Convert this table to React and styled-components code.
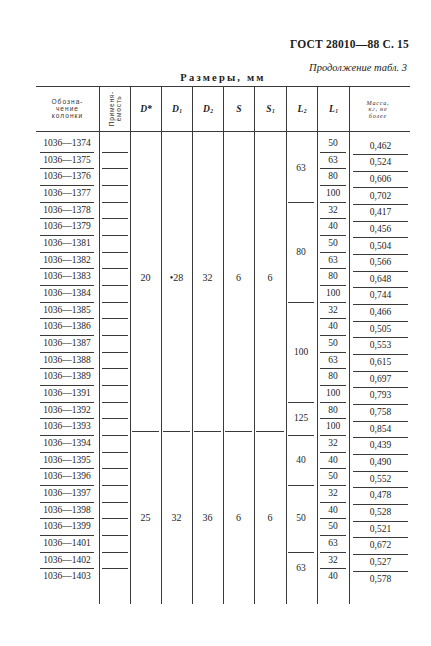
import React from 'react';
import styled, { createGlobalStyle } from 'styled-components';

const ROW = 16.67;
const INK = '#1d1d1d';
const RULE = '#3a3a3a';

const Global = createGlobalStyle`
  html, body { margin: 0; padding: 0; background: #fff; }
  body {
    width: 431px; height: 646px; overflow: hidden;
    font-family: "Liberation Serif", "DejaVu Serif", serif;
    color: ${INK};
  }
`;

const Page = styled.div`
  width: 431px;
  height: 646px;
  box-sizing: border-box;
  padding: 37px 21px 0 36px;
  display: flex;
  flex-direction: column;
`;

const RunningHead = styled.div`
  align-self: flex-end;
  height: 14px;
  line-height: 14px;
  font-size: 11.5px;
  font-weight: bold;
  letter-spacing: 0.2px;
  padding-right: 1px;
`;

const TableRef = styled.div`
  align-self: flex-end;
  margin-top: 10px;
  height: 13px;
  line-height: 13px;
  font-size: 10.5px;
  font-style: italic;
  padding-right: 3px;
`;

const Caption = styled.div`
  margin-top: -2px;
  height: 12px;
  line-height: 12px;
  text-align: center;
  font-size: 10.5px;
  font-weight: bold;
  letter-spacing: 2.2px;
`;

const Table = styled.div`
  margin-top: 2px;
  height: 518px;
  box-sizing: border-box;
  border-top: 1.5px solid ${RULE};
  display: flex;
  align-items: stretch;
`;

const Column = styled.div`
  width: ${p => p.$w}px;
  box-sizing: border-box;
  border-left: ${p => (p.$first ? 'none' : `1px solid ${RULE}`)};
  display: flex;
  flex-direction: column;
`;

const HeadCell = styled.div`
  height: 44.5px;
  box-sizing: border-box;
  border-bottom: 1px solid ${RULE};
  display: flex;
  align-items: center;
  justify-content: center;
  text-align: center;
`;

const SmallHead = styled.div`
  font-family: "Liberation Sans", "DejaVu Sans", sans-serif;
  font-size: 6.6px;
  line-height: 7.4px;
  letter-spacing: 1px;
  color: #333;
`;

const VerticalHead = styled.div`
  writing-mode: vertical-rl;
  transform: rotate(180deg);
  font-family: "Liberation Sans", "DejaVu Sans", sans-serif;
  font-size: 6.6px;
  line-height: 6.5px;
  letter-spacing: 0.7px;
  color: #333;
  text-align: center;
`;

const MassHead = styled.div`
  font-style: italic;
  font-size: 6.2px;
  line-height: 6.8px;
  letter-spacing: 0.8px;
  color: #333;
  padding-right: 4px;
  padding-top: 2px;
`;

const Symbol = styled.span`
  font-style: italic;
  font-weight: bold;
  font-size: 9.5px;
  sub {
    font-size: 5.5px;
    vertical-align: -1px;
    margin-left: 0.5px;
  }
`;

const Body = styled.div`
  flex: 1;
  display: flex;
  flex-direction: column;
  padding-top: ${p => p.$top ?? 4.6}px;
`;

const Cell = styled.div`
  height: ${p => p.$h}px;
  flex: ${p => (p.$grow ? 1 : 'none')};
  box-sizing: border-box;
  margin: 0 ${p => p.$mr ?? 2}px 0 ${p => p.$ml ?? 2}px;
  border-bottom: ${p => (p.$line ? `1px solid ${RULE}` : '1px solid transparent')};
  display: flex;
  align-items: center;
  justify-content: center;
  padding-bottom: ${p => p.$pb ?? 0}px;
  font-size: ${p => p.$fs ?? 9.5}px;
  line-height: 1;
  white-space: nowrap;
`;

const designations = [
  '1374', '1375', '1376', '1377', '1378', '1379', '1381', '1382', '1383',
  '1384', '1385', '1386', '1387', '1388', '1389', '1391', '1392', '1393',
  '1394', '1395', '1396', '1397', '1398', '1399', '1401', '1402', '1403',
];

const l2Groups = [
  ['63', 4], ['80', 6], ['100', 6], ['125', 2], ['40', 3], ['50', 4], ['63', 2],
];

const l1 = [
  '50', '63', '80', '100', '32', '40', '50', '63', '80', '100', '32', '40',
  '50', '63', '80', '100', '80', '100', '32', '40', '50', '32', '40', '50',
  '63', '32', '40',
];

const mass = [
  '0,462', '0,524', '0,606', '0,702', '0,417', '0,456', '0,504', '0,566',
  '0,648', '0,744', '0,466', '0,505', '0,553', '0,615', '0,697', '0,793',
  '0,758', '0,854', '0,439', '0,490', '0,552', '0,478', '0,528', '0,521',
  '0,672', '0,527', '0,578',
];

const groupCols = [
  { w: 31, head: <Symbol>D*</Symbol>, a: '20', b: '25' },
  { w: 31, head: <Symbol>D<sub>1</sub></Symbol>, a: '•28', b: '32' },
  { w: 31, head: <Symbol>D<sub>2</sub></Symbol>, a: '32', b: '36' },
  { w: 31, head: <Symbol>S</Symbol>, a: '6', b: '6' },
  { w: 32, head: <Symbol>S<sub>1</sub></Symbol>, a: '6', b: '6' },
];

export default function App() {
  const last = designations.length - 1;
  return (
    <>
      <Global />
      <Page>
        <RunningHead>ГОСТ 28010—88 С. 15</RunningHead>
        <TableRef>Продолжение табл. 3</TableRef>
        <Caption>Размеры, мм</Caption>
        <Table>
          <Column $w={63} $first>
            <HeadCell>
              <SmallHead>Обозна-<br />чение<br />колонки</SmallHead>
            </HeadCell>
            <Body>
              {designations.map((d, i) => (
                <Cell key={d} $h={ROW} $line={i < last} $ml={4} $mr={5}>
                  1036—{d}
                </Cell>
              ))}
            </Body>
          </Column>

          <Column $w={31}>
            <HeadCell>
              <VerticalHead>Применя-<br />емость</VerticalHead>
            </HeadCell>
            <Body>
              {designations.map((d, i) => (
                <Cell key={d} $h={ROW} $line={i < last} $ml={2} $mr={2} />
              ))}
            </Body>
          </Column>

          {groupCols.map((c, i) => (
            <Column key={i} $w={c.w}>
              <HeadCell>{c.head}</HeadCell>
              <Body>
                <Cell $h={18 * ROW - 4} $line $pb={11} $ml={1} $mr={2} $fs={10}>
                  {c.a}
                </Cell>
                <Cell $grow $ml={1} $mr={2} $fs={10}>
                  {c.b}
                </Cell>
              </Body>
            </Column>
          ))}

          <Column $w={31}>
            <HeadCell><Symbol>L<sub>2</sub></Symbol></HeadCell>
            <Body>
              {l2Groups.map(([v, n], i) => (
                <Cell key={i} $h={n * ROW} $line={i < l2Groups.length - 1} $ml={1} $mr={3}>
                  {v}
                </Cell>
              ))}
            </Body>
          </Column>

          <Column $w={32}>
            <HeadCell><Symbol>L<sub>1</sub></Symbol></HeadCell>
            <Body>
              {l1.map((v, i) => (
                <Cell key={i} $h={ROW} $line={i < last} $ml={2} $mr={3}>
                  {v}
                </Cell>
              ))}
            </Body>
          </Column>

          <Column $w={61}>
            <HeadCell>
              <MassHead>Масса,<br />кг, не<br />более</MassHead>
            </HeadCell>
            <Body $top={7}>
              {mass.map((v, i) => (
                <Cell key={i} $h={ROW} $line={i < last} $ml={3} $mr={2}>
                  {v}
                </Cell>
              ))}
            </Body>
          </Column>
        </Table>
      </Page>
    </>
  );
}
